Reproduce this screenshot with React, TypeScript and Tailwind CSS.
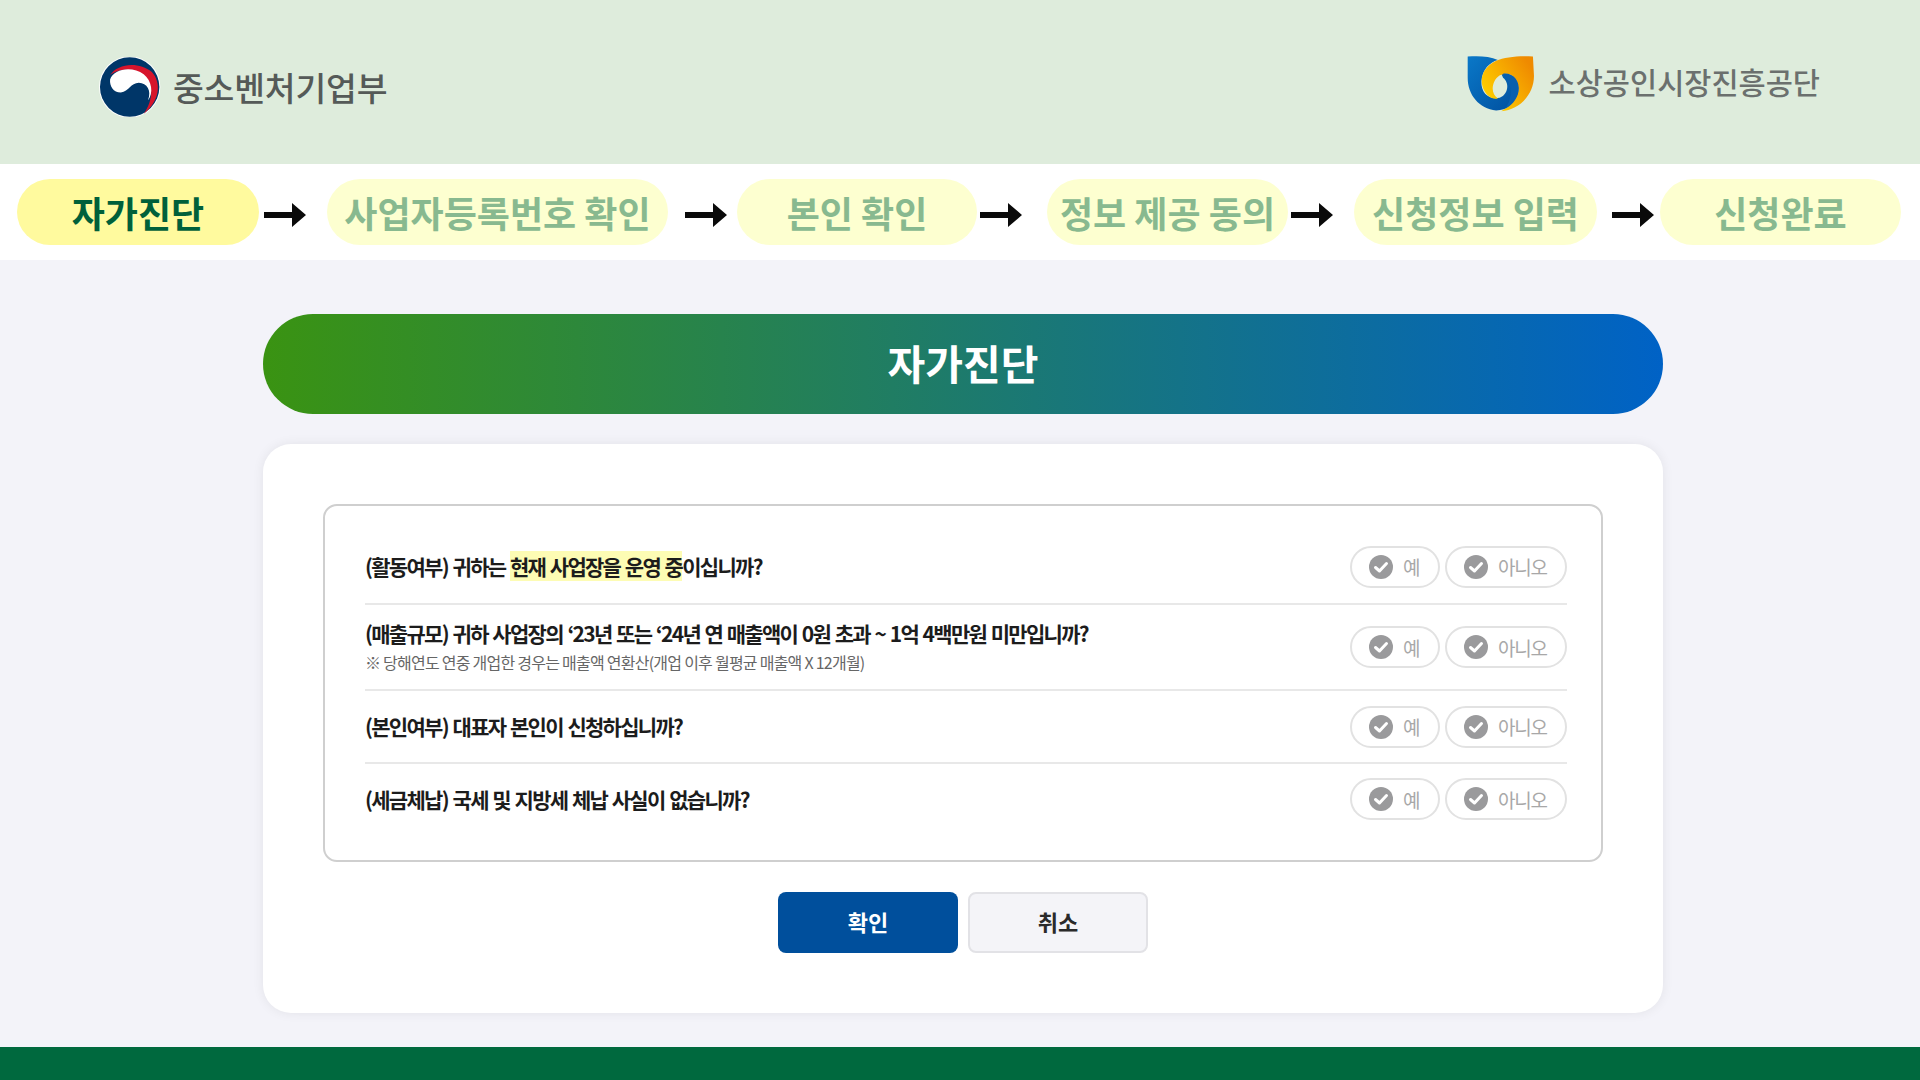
import React from "react";

const FONT = "font-['Noto_Sans_CJK_KR','Noto_Sans',sans-serif]";

function Taegeuk() {
  return (
    <svg width="62" height="60" viewBox="28 20 190 182" className="shrink-0">
      <circle cx="122" cy="111" r="94" fill="#ffffff" />
      <circle cx="122" cy="111" r="91" fill="#003668" />
      <path d="M62 75C85 38 150 32 190 65C218 95 218 150 165 194C196 150 195 100 165 75C130 50 85 55 62 75Z" fill="#d6142c" />
      <path d="M62 88C72 55 130 45 165 72C190 92 196 130 178 152C190 120 175 100 150 98C125 98 120 125 95 128C72 128 60 108 62 88Z" fill="#ffffff" />
    </svg>
  );
}

function SemasLogo() {
  return (
    <svg width="68" height="58" viewBox="40 36 198 164" className="mt-[3px] shrink-0">
      <defs>
        <linearGradient id="og" x1="0.1" y1="0.8" x2="0.95" y2="0.2">
          <stop offset="0" stopColor="#ffd000" />
          <stop offset="1" stopColor="#ef8a00" />
        </linearGradient>
        <linearGradient id="bg" x1="0" y1="0" x2="1" y2="1">
          <stop offset="0" stopColor="#0a78c8" />
          <stop offset="1" stopColor="#004f9e" />
        </linearGradient>
      </defs>
      <path d="M42 38C70 36 105 36 130 48C105 55 85 75 82 110C80 145 105 165 135 158C160 150 165 115 145 100L140 88C175 85 195 110 190 140C185 175 155 195 125 195C75 190 42 150 42 100Z" fill="url(#bg)" />
      <path d="M232 38C190 35 150 40 125 50C95 65 78 90 84 120C90 150 115 165 130 160C115 150 110 130 120 110C128 92 150 85 165 90C185 98 195 125 188 145C178 172 160 185 140 197C190 195 235 150 235 95Z" fill="url(#og)" />
      <path d="M145 88C175 85 195 110 190 140C186 165 165 185 150 190C165 172 170 150 165 125C160 105 152 98 145 88Z" fill="#0a5fae" />
    </svg>
  );
}

function Arrow({ className }: { className: string }) {
  return (
    <svg width="42" height="24" viewBox="0 0 42 24" className={className}>
      <path d="M0 9H28V0L42 12L28 24V15H0Z" fill="#0a0a0a" />
    </svg>
  );
}

function Check() {
  return (
    <svg width="24" height="24" viewBox="0 0 24 24" className="shrink-0">
      <circle cx="12" cy="12" r="12" fill="#9a9a9c" />
      <path d="M6.5 12.5L10.5 16L17.5 8.5" fill="none" stroke="#ffffff" strokeWidth="3" strokeLinecap="round" strokeLinejoin="round" />
    </svg>
  );
}

function Choices() {
  return (
    <div className="flex shrink-0 gap-[5px]">
      <div className="flex h-[42px] w-[90px] items-center gap-[10px] rounded-full border-2 border-[#e2e2e2] pl-[17px]">
        <Check />
        <span className="text-[19px] leading-none tracking-[-1px] text-[#a8a8a8]">예</span>
      </div>
      <div className="flex h-[42px] w-[122px] items-center gap-[10px] rounded-full border-2 border-[#e2e2e2] pl-[17px]">
        <Check />
        <span className="text-[19px] leading-none tracking-[-1.2px] text-[#a8a8a8]">아니오</span>
      </div>
    </div>
  );
}

const qText = "text-[21px] font-bold leading-[28px] tracking-[-1.7px] [word-spacing:1.5px] text-[#1c1c1c]";

export default function App() {
  return (
    <div className={`flex h-[1080px] w-[1920px] flex-col overflow-hidden bg-[#f3f3f9] ${FONT}`}>
      <header className="flex h-[164px] shrink-0 items-center justify-between bg-[#deecdc] pl-[99px] pr-[100px]">
        <div className="mt-[10px] flex items-center gap-[12px]">
          <Taegeuk />
          <span className="text-[33.5px] font-medium leading-none tracking-[-0.2px] text-[#555a58]">중소벤처기업부</span>
        </div>
        <div className="flex items-center gap-[14px]">
          <SemasLogo />
          <span className="text-[29.5px] font-medium leading-none text-[#6b706e]">소상공인시장진흥공단</span>
        </div>
      </header>

      <nav className="flex h-[96px] shrink-0 items-center bg-white pl-[17px] text-[36px] font-bold leading-none">
        <div className="flex h-[66px] w-[242px] items-center justify-center rounded-[33px] bg-[#fffa9e] text-[#00603a]">자가진단</div>
        <Arrow className="ml-[5px] mr-[21px] mt-[5px] shrink-0" />
        <div className="flex h-[66px] w-[341px] items-center justify-center rounded-[33px] bg-[#fdffd0] text-[#88b98f]">사업자등록번호 확인</div>
        <Arrow className="ml-[17px] mr-[10px] mt-[5px] shrink-0" />
        <div className="flex h-[66px] w-[240px] items-center justify-center rounded-[33px] bg-[#fdffd0] text-[#88b98f]">본인 확인</div>
        <Arrow className="ml-[3px] mr-[25px] mt-[5px] shrink-0" />
        <div className="flex h-[66px] w-[241px] items-center justify-center rounded-[33px] bg-[#fdffd0] text-[#88b98f]">정보 제공 동의</div>
        <Arrow className="ml-[3px] mr-[21px] mt-[5px] shrink-0" />
        <div className="flex h-[66px] w-[243px] items-center justify-center rounded-[33px] bg-[#fdffd0] text-[#88b98f]">신청정보 입력</div>
        <Arrow className="ml-[15px] mr-[6px] mt-[5px] shrink-0" />
        <div className="flex h-[66px] w-[241px] items-center justify-center rounded-[33px] bg-[#fdffd0] text-[#88b98f]">신청완료</div>
      </nav>

      <main className="flex flex-1 flex-col items-center pl-[6px] pt-[54px]">
        <div className="flex h-[100px] w-[1400px] items-center justify-center rounded-full bg-linear-to-r/srgb from-[#3a9312] to-[#0062c6] pb-[4px] text-[41px] font-bold leading-none text-white">
          자가진단
        </div>
        <section className="mt-[30px] flex h-[569px] w-[1400px] flex-col items-center rounded-[28px] bg-white px-[60px] pt-[60px] shadow-[0_0_12px_rgba(0,0,0,0.07)]">
          <div className="h-[358px] w-full rounded-[14px] border-2 border-[#cfcfcf] pl-[40px] pr-[34px] pt-[24px]">
            <div className="flex h-[75px] items-center justify-between border-b-2 border-[#e8e8e8]">
              <p className={`${qText} mb-[2px]`}>
                (활동여부) 귀하는 <span className="bg-[#fdfcb4]">현재 사업장을 운영 중</span>이십니까?
              </p>
              <Choices />
            </div>
            <div className="flex h-[86px] items-center justify-between border-b-2 border-[#e8e8e8]">
              <div className="pb-[2px]">
                <p className={`${qText} mb-[4px]`}>(매출규모) 귀하 사업장의 ‘23년 또는 ‘24년 연 매출액이 0원 초과 ~ 1억 4백만원 미만입니까?</p>
                <p className="text-[16px] leading-[22px] tracking-[-0.75px] text-[#666666]">※ 당해연도 연중 개업한 경우는 매출액 연환산(개업 이후 월평균 매출액 X 12개월)</p>
              </div>
              <Choices />
            </div>
            <div className="flex h-[73px] items-center justify-between border-b-2 border-[#e8e8e8]">
              <p className={`${qText} mb-[2px]`}>(본인여부) 대표자 본인이 신청하십니까?</p>
              <Choices />
            </div>
            <div className="flex h-[72px] items-center justify-between pb-[2px]">
              <p className={qText}>(세금체납) 국세 및 지방세 체납 사실이 없습니까?</p>
              <Choices />
            </div>
          </div>
          <div className="mt-[30px] flex gap-[10px]">
            <button className="flex h-[61px] w-[180px] items-center justify-center rounded-[8px] bg-[#004f9c] pb-[2px] text-[22px] font-bold text-white">확인</button>
            <button className="flex h-[61px] w-[180px] items-center justify-center rounded-[8px] border-2 border-[#e2e2e6] bg-[#f4f4f8] pb-[2px] text-[22px] font-bold text-[#2a2a2a]">취소</button>
          </div>
        </section>
      </main>

      <footer className="h-[33px] shrink-0 bg-[#00693e]" />
    </div>
  );
}
